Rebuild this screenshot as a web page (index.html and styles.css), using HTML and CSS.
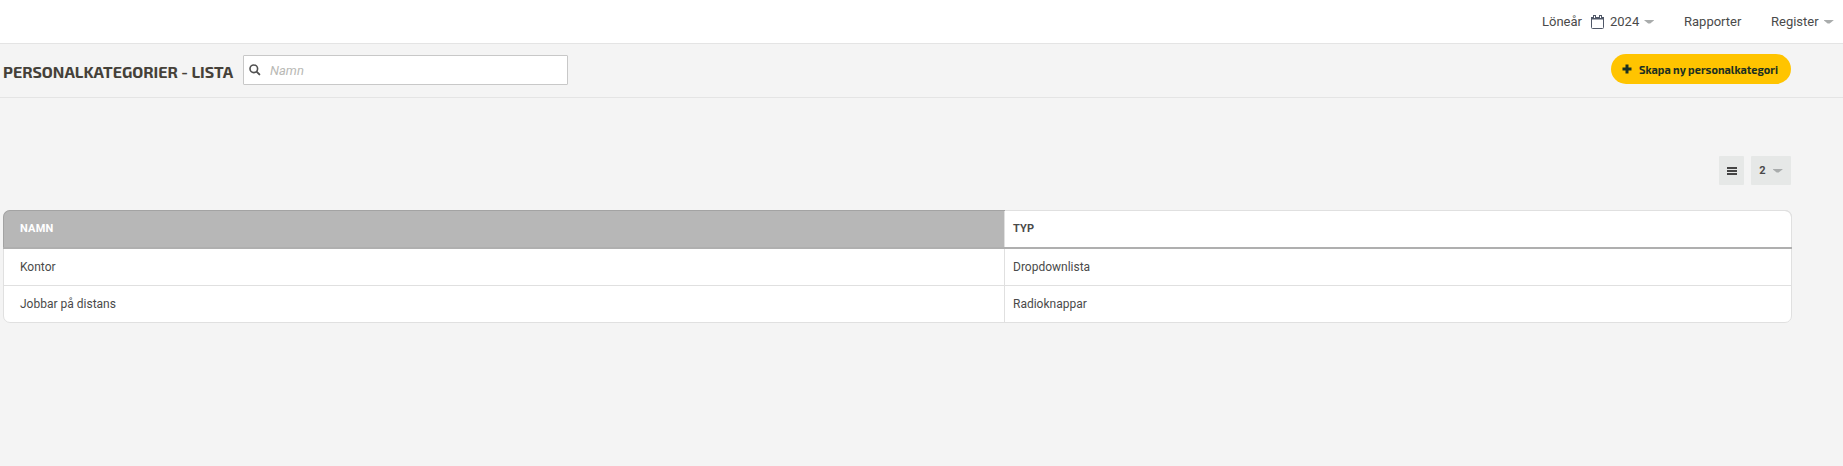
FILE: index.html
```html
<!DOCTYPE html>
<html lang="sv">
<head>
<meta charset="utf-8">
<title>Personalkategorier - Lista</title>
<link rel="stylesheet" href="styles.css">
</head>
<body>
	<div class="topBar">
		<a class="year">Löneår
			<svg class="calendar" width="13" height="14" viewBox="0 0 13 14"><path d="M.5 2.5h12v10q0 1-1 1h-10q-1 0-1-1z" fill="none" stroke="#505868"/><path d="M0 2h13v2.6H0zM2 0h3v3h-3zM8 0h3v3h-3z" fill="#505868"/><path d="M3.5 1v2M9.5 1v2" stroke="#fff"/></svg>
			<span>2024</span><i class="caret"></i>
		</a>
		<a class="reports">Rapporter</a>
		<a class="register">Register<i class="caret"></i></a>
	</div>
	<div class="header">
		<h1>PERSONALKATEGORIER - LISTA</h1>
		<div class="search">
			<svg width="12" height="12" viewBox="0 0 12 12"><circle cx="4.8" cy="4.8" r="3.8" fill="none" stroke="#505050" stroke-width="1.6"/><path d="M7.8 7.8l2.6 2.6" stroke="#505050" stroke-width="1.9" stroke-linecap="round"/></svg>
			<input type="text" placeholder="Namn">
		</div>
		<button class="create"><svg width="10" height="10" viewBox="0 0 10 10"><path d="M3.5 .5h3v3h3v3h-3v3h-3v-3h-3v-3h3z" fill="#1b3022"/></svg><span>Skapa ny personalkategori</span></button>
	</div>
	<div class="tools">
		<div class="tool menu"><svg width="10" height="8" viewBox="0 0 10 8"><path d="M0 0h10v2H0zM0 3h10v2H0zM0 6h10v2H0z" fill="#454545"/></svg></div>
		<div class="tool count">2<i class="caret"></i></div>
	</div>
	<div class="table">
		<div class="row head">
			<div class="cell name sorted">NAMN</div>
			<div class="cell type">TYP</div>
		</div>
		<div class="row">
			<div class="cell name">Kontor</div>
			<div class="cell type">Dropdownlista</div>
		</div>
		<div class="row">
			<div class="cell name">Jobbar på distans</div>
			<div class="cell type">Radioknappar</div>
		</div>
	</div>
</body>
</html>
```

FILE: styles.css
```css
*{ box-sizing:border-box; margin:0; padding:0;}

body{ background:#f4f4f4; color:#4a4a4a; font-family:Roboto, sans-serif; font-size:12px; overflow:hidden;}
svg{ display:block; flex:none;}

.topBar{ display:flex; justify-content:flex-end; height:44px; padding-right:9px; background:#fff; border-bottom:1px solid #e4e4e4; font-size:13px; line-height:43px;}
.topBar a{ display:flex; align-items:center;}
.topBar .year{ width:142px;}
.topBar .calendar{ margin:0 6px 0 9px;}
.topBar .reports{ width:87px;}
.topBar .register{ width:63px;}
.caret{ width:10px; height:4px; margin-left:5px; background:#a9acac; clip-path:polygon(0 0, 100% 0, 100% 20%, 60% 100%, 40% 100%, 0 20%); flex:none;}

.header{ display:flex; align-items:flex-start; height:54px; padding:10px 52px 0 3px; border-bottom:1px solid #e4e4e4;}
.header h1{ width:240px; padding-top:7px; color:#454139; font-family:"Exo 2", Roboto, sans-serif; font-size:16px; font-weight:700; line-height:22px; white-space:nowrap;}
.search{ display:flex; align-items:center; width:325px; height:30px; margin-top:1px; padding-left:5px; background:#fff; border:1px solid #c8c8c8; border-radius:1px;}
.search input{ width:290px; padding-left:9px; border:0; outline:0; font:italic 13px Roboto, sans-serif;}
.search input::placeholder{ color:#b9b9b5;}
.create{ display:flex; align-items:center; width:180px; height:30px; margin-left:auto; padding-left:11px; background:#ffc400; border:0; border-radius:15px; color:#1b3022; font:700 11px "Exo 2", Roboto, sans-serif; white-space:nowrap;}
.create span{ margin-left:7px;}

.tools{ display:flex; justify-content:flex-end; gap:7px; margin:58px 52px 25px 0;}
.tool{ display:flex; align-items:center; justify-content:center; height:29px; background:#e6e8e7; border-radius:1px; font-size:11px; font-weight:700;}
.menu{ width:25px;}
.count{ width:40px;}
.count .caret{ margin-left:7px;}

.table{ width:1789px; margin-left:3px; background:#fff; border:1px solid #e0e0e0; border-radius:7px;}
.row{ display:flex; height:37px; border-bottom:1px solid #e0e0e0;}
.row:last-child{ height:36px; border-bottom:0;}
.cell{ display:flex; align-items:center;}
.name{ width:1001px; padding-left:16px; border-right:1px solid #e0e0e0;}
.type{ flex:1; padding-left:8px;}
.head{ height:39px; margin:-1px -1px 0; border-bottom:2px solid #afafaf; border-radius:7px 7px 0 0; font-size:11px; font-weight:700; letter-spacing:.2px;}
.head .type{ border:1px solid #e0e0e0; border-width:1px 1px 0 0; border-radius:0 7px 0 0; padding-bottom:2px;}
.head .sorted{ width:1002px; padding:0 0 2px 16px; background:#b7b7b7; border:1px solid #a3a3a3; border-width:1px 0 0 1px; border-radius:7px 0 0 0; box-shadow:inset -1px 0 #e0e0e0; color:#fff;}
```
